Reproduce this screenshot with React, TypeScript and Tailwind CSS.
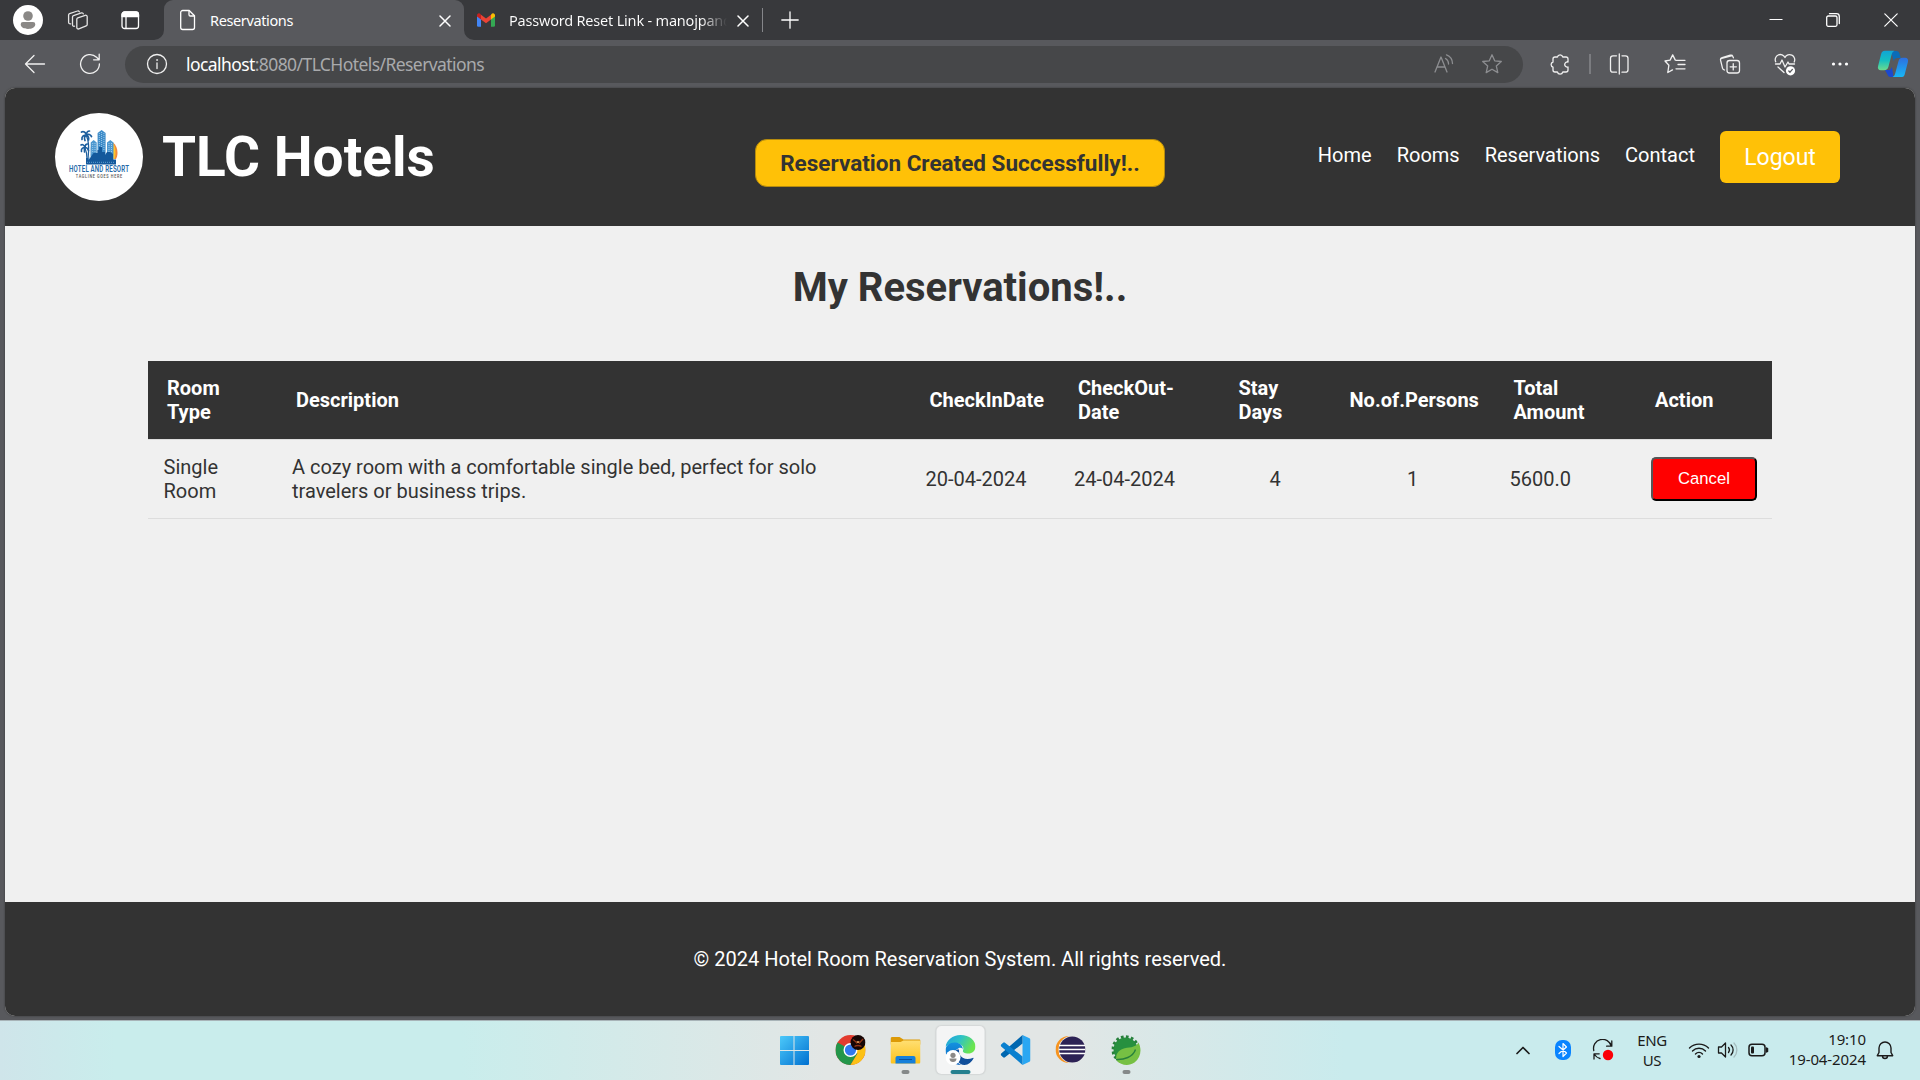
import React from "react";

type IconProps = { w: number; h: number; className?: string; children: React.ReactNode };

function Glyph({ w, h, className = "", children }: IconProps) {
  return (
    <svg
      width={w}
      height={h}
      viewBox={`0 0 ${w} ${h}`}
      fill="none"
      stroke="currentColor"
      strokeWidth={1.3}
      strokeLinecap="round"
      strokeLinejoin="round"
      className={"block shrink-0 " + className}
    >
      {children}
    </svg>
  );
}

function TabBar() {
  return (
    <div className="flex h-10 shrink-0 items-center bg-[#38393c] text-white">
      <Glyph w={30} h={30} className="ml-[13px]">
        <circle cx="15" cy="15" r="15" fill="#fff" stroke="none" />
        <circle cx="15" cy="11" r="4.8" fill="#8a8886" stroke="none" />
        <path d="M10 17h10a2.3 2.3 0 0 1 2.3 2.3c0 3-3.2 4.7-7.3 4.7s-7.3-1.7-7.3-4.7A2.3 2.3 0 0 1 10 17z" fill="#8a8886" stroke="none" />
      </Glyph>
      <Glyph w={24} h={24} className="ml-[23px] text-[#e4e4e4]">
        <path d="M10.8 11.2a1.5 1.5 0 0 1 1-1.4l7.4-2.5a1.5 1.5 0 0 1 2 1.4v7.8a1.5 1.5 0 0 1-1 1.4l-7.4 3a1.5 1.5 0 0 1-2-1.4z" />
        <path d="M8.5 18.2a1.5 1.5 0 0 1-2-1.5V9a1.5 1.5 0 0 1 1-1.4l7.9-2.7a1.5 1.5 0 0 1 1.9 1" />
        <path d="M4.6 15.8a1.5 1.5 0 0 1-2-1.5V7a1.5 1.5 0 0 1 1-1.4L11.4 3a1.5 1.5 0 0 1 1.9.8" />
      </Glyph>
      <Glyph w={20} h={20} className="ml-[30px]">
        <rect x="2" y="2" width="16.5" height="16.5" rx="2.5" />
        <path d="M2 5a3 3 0 0 1 3-3h10.5a3 3 0 0 1 3 3v1.5H2z" fill="#fff" />
        <path d="M6 6v12" />
      </Glyph>
      <div className="relative ml-6 flex h-10 w-[300px] items-center rounded-t-[9px] bg-[#58595d]">
        <svg className="absolute bottom-0 -left-[10px]" width="10" height="10" viewBox="0 0 10 10">
          <path d="M10 0v10H0A10 10 0 0 0 10 0z" fill="#58595d" />
        </svg>
        <svg className="absolute -right-[10px] bottom-0" width="10" height="10" viewBox="0 0 10 10">
          <path d="M0 0v10h10A10 10 0 0 1 0 0z" fill="#58595d" />
        </svg>
        <Glyph w={17} h={22} className="ml-[15px]">
          <path d="M1.7 3.5a2 2 0 0 1 2-2h6.5l5.3 5.3v11.7a2 2 0 0 1-2 2H3.7a2 2 0 0 1-2-2z" />
          <path d="M10 1.7v4a1.3 1.3 0 0 0 1.3 1.3h4" />
        </Glyph>
        <span className="-mt-px ml-[14px] w-[221px] whitespace-nowrap font-['Noto_Sans',sans-serif] text-[14.5px] leading-5 tracking-[-0.37px]">Reservations</span>
        <Glyph w={12} h={12} className="mt-[2px] ml-[8px]">
          <path d="M1 1l10 10M11 1L1 11" strokeWidth={1.5} />
        </Glyph>
      </div>
      <svg width="18" height="14" viewBox="0 0 18 14" className="ml-[13px] block shrink-0">
        <path d="M0 2.5V12.5A1.3 1.3 0 0 0 1.3 13.8H4V6z" fill="#4285f4" />
        <path d="M18 2.5V12.5a1.3 1.3 0 0 1-1.3 1.3H14V6z" fill="#34a853" />
        <path d="M14 1.8V6.5l4-3V2A1.9 1.9 0 0 0 15 .6z" fill="#fbbc04" />
        <path d="M4 1.8L9 5.6l5-3.8v4.7L9 10.3 4 6.5z" fill="#ea4335" />
        <path d="M0 2v1.5l4 3V1.8L3 .6A1.9 1.9 0 0 0 0 2z" fill="#c5221f" />
      </svg>
      <span className="-mt-px ml-[14px] w-[218px] overflow-hidden whitespace-nowrap bg-linear-to-r from-white from-88% to-transparent bg-clip-text font-['Noto_Sans',sans-serif] text-[14.5px] leading-5 tracking-[-0.2px] text-transparent">
        Password Reset Link - manojpand
      </span>
      <Glyph w={12} h={12} className="mt-[2px] ml-[10px]">
        <path d="M1 1l10 10M11 1L1 11" strokeWidth={1.5} />
      </Glyph>
      <div className="ml-[13px] h-6 w-px bg-[#85868a]" />
      <Glyph w={18} h={18} className="ml-[18px]">
        <path d="M9 .8v16.4M.8 9h16.4" />
      </Glyph>
      <div className="ml-auto flex items-center">
        <Glyph w={14} h={14} className="mr-[43px]">
          <path d="M.5 6.5h13" strokeWidth={1} strokeLinecap="butt" />
        </Glyph>
        <Glyph w={14} h={14} className="mr-[44px]">
          <rect x=".7" y="3" width="10.3" height="10.3" rx="1.5" />
          <path d="M3.5.7h7a2.8 2.8 0 0 1 2.8 2.8v7" />
        </Glyph>
        <Glyph w={14} h={14} className="mr-[22px]">
          <path d="M.8.8l12.4 12.4M13.2.8L.8 13.2" strokeWidth={1.2} />
        </Glyph>
      </div>
    </div>
  );
}

function Toolbar() {
  return (
    <div className="flex h-12 shrink-0 items-center bg-[#58595d] text-[#f0f0f0]">
      <Glyph w={22} h={20} className="-mt-px ml-[24px]">
        <path d="M10 1.5L1.5 10l8.5 8.5M1.5 10h19" />
      </Glyph>
      <Glyph w={22} h={22} className="-mt-px ml-[33px]">
        <path d="M20.4 10.8a9.4 9.4 0 1 1-2.8-6.5L20 6.700M20.2 1.2v5.6h-5.6" />
      </Glyph>
      <div className="ml-[24px] flex h-[37px] w-[1398px] items-center rounded-full bg-[#464749]">
        <Glyph w={22} h={22} className="ml-[21px]">
          <circle cx="11" cy="11" r="9.5" />
          <path d="M11 10v5.5" />
          <circle cx="11" cy="7" r=".6" fill="currentColor" strokeWidth={0.6} />
        </Glyph>
        <div className="-mt-px ml-[18px] whitespace-nowrap font-['Noto_Sans',sans-serif] text-[17.5px] leading-6 tracking-[-0.58px] text-[#a9aaac]">
          <span className="text-white">localhost</span>:8080/TLCHotels/Reservations
        </div>
        <Glyph w={22} h={20} className="-mt-px mr-[26px] ml-auto text-[#8d8e91]">
          <path d="M2 18L8 3l6 15M4 13h8" />
          <path d="M12.5 4.5a6 6 0 0 1 3 5.5M13.5.8a9.5 9.5 0 0 1 6 8.7" />
        </Glyph>
        <Glyph w={22} h={22} className="mr-[20px] text-[#8d8e91]">
          <path d="M11 1.8l2.7 6 6.6.7-5 4.4 1.5 6.7L11 16.2l-5.8 3.4 1.5-6.7-5-4.4 6.6-.7z" />
        </Glyph>
      </div>
      <Glyph w={32} h={32} className="ml-[20px]">
        <path d="M10 11a2 2 0 0 1 2-2h2.4a2.8 2.8 0 0 1 5.4 0H23a2 2 0 0 1 2 2v3a2.6 2.6 0 1 0 0 5v3a2 2 0 0 1-2 2h-3.2a2.8 2.8 0 0 1-5.4 0H12a2 2 0 0 1-2-2v-3a2.6 2.6 0 0 1 0-5z" />
      </Glyph>
      <div className="ml-[14px] h-5 w-[2px] bg-[#7b7c80]" />
      <Glyph w={32} h={32} className="ml-[12px]">
        <path d="M13.5 7.8H10a2.5 2.5 0 0 0-2.5 2.5v11.4a2.5 2.5 0 0 0 2.5 2.5h3.5M19 7.800h3.500a2.500 2.500 0 0 1 2.500 2.500v11.400a2.500 2.500 0 0 1-2.500 2.500H19M16.300 6v20" />
      </Glyph>
      <Glyph w={32} h={32} className="ml-[24px]">
        <path d="M17.500 12.300l-1.200-.2-2.600-5.200-2.600 5.200-5.100.9 3.900 4.200-1.100 7.300 4.700-2.600M17.500 12.300H26M19 16.500h7M17 20.800h9" />
      </Glyph>
      <Glyph w={32} h={32} className="ml-[23px]">
        <rect x="13" y="12.500" width="12.500" height="12.500" rx="2.500" />
        <path d="M19.250 15.700v6.200M16.150 18.800h6.200M10.500 22l-.7-.3a2.500 2.500 0 0 1-1.300-1.500L6.600 12.400a2.300 2.300 0 0 1 1.600-2.700l8-2.500a2.300 2.300 0 0 1 2.800 1.600l.4 1M6.800 10.500l11.500-3" />
      </Glyph>
      <Glyph w={32} h={32} className="ml-[23px]">
        <path d="M16 9.500a5 5 0 0 0-9.300 4.300M16 9.500a5 5 0 0 1 9.200 4.500M6.500 16H11l2-4 3 7 3-5 1 2h5.500M9 19l6 5.500" />
        <circle cx="21.500" cy="22.800" r="4.600" fill="#fff" stroke="none" />
        <path d="M19.800 23l1.200 1.200 2.400-2.800" stroke="#58595d" />
      </Glyph>
      <Glyph w={32} h={32} className="ml-[23px]">
        <g fill="#fff" stroke="none">
          <circle cx="9.500" cy="16" r="1.600" />
          <circle cx="16" cy="16" r="1.600" />
          <circle cx="22.500" cy="16" r="1.600" />
        </g>
      </Glyph>
      <svg width="32" height="32" viewBox="0 0 32 32" className="ml-[21px] block shrink-0">
        <defs>
          <linearGradient id="cpl" x1="0" y1="0" x2="0" y2="1">
            <stop offset="0" stopColor="#10a5d6" />
            <stop offset=".5" stopColor="#16bfc0" />
            <stop offset="1" stopColor="#6ddb8c" />
          </linearGradient>
          <linearGradient id="cpr" x1="0" y1="0" x2="0" y2="1">
            <stop offset="0" stopColor="#2d6fe0" />
            <stop offset="1" stopColor="#18b7f5" />
          </linearGradient>
        </defs>
        <path d="M14 3h5.500a3 3 0 0 1 2.800 2.100L23.800 10h-3.300a4 4 0 0 0-3.800 3z" fill="#0a6cb8" />
        <path d="M8 22h5l2-3 1.500 10h-3a3 3 0 0 1-2.900-2.200z" fill="#1b49cf" />
        <path d="M8 2.800h9.500c-1.700.7-2.400 2-3 4.200l-3 11.500c-.7 2.500-1.800 3.700-4.500 3.700H4c-2.700 0-3.600-1.700-2.900-4.200L4 6.500C4.700 4 5.500 2.800 8 2.800z" fill="url(#cpl)" />
        <path d="M25 29h-9.500c1.700-.7 2.300-2 2.900-4.200l3-11.300c.7-2.500 1.800-3.700 4.200-3.700H28c2.700 0 3.500 1.700 2.900 4.200l-2.900 11.300C27.300 27.800 27 29 25 29z" fill="url(#cpr)" />
      </svg>
    </div>
  );
}

function HotelLogo() {
  return (
    <svg width="88" height="88" viewBox="0 0 88 88" className="block shrink-0">
      <circle cx="44" cy="44" r="44" fill="#fff" />
      <path d="M58 29.500c3 2.500 4.500 6 4.500 10.500 0 2.500-.7 4.500-1.500 6h-3z" fill="#f58a3c" />
      <path d="M57.500 29.500c2 2.500 3 6 3 10.500 0 2.500-.4 4.500-1 6h-2z" fill="#ffc62b" />
      <path d="M42.600 20l4-3 4 3v27h-8z" fill="#3d8cc9" />
      <path d="M35.700 29.500l3-2.500 3 2.500V47h-6zM52 29.500l3.300-2.500 3.200 2.500V47H52z" fill="#4d98d0" />
      <path d="M38.500 40h4v-3h1.500v-3h3v5h3v3l2-3h3l3 2v6H31v-2h4z" fill="#14599c" />
      <path d="M44.300 20v14M46.600 19v15M48.900 20v17M37.700 30v9M40 30v9M54 30v9M56.500 30v9" stroke="#b7d8ef" strokeWidth=".8" strokeDasharray="1 1" />
      <rect x="31" y="46.500" width="30" height="5" fill="#14599c" />
      <path d="M32 49.300h28" stroke="#74b0dc" strokeWidth=".8" strokeDasharray="1 1" />
      <g stroke="#1d5f9e" fill="none" strokeLinecap="round">
        <path d="M31.500 23c2.500 5 2.500 14 1.500 23" strokeWidth="1.300" />
        <path d="M30 35c1.300 3 2 7 2 11" strokeWidth="1.200" />
        <path d="M31.500 22c-1-3-3-4-5-3M31.500 22c-3 0-5 1.500-4.500 4.500M31.500 22c0-2 1-4 3-4M31.500 22c2-1.500 4-.5 5 1.500M31.500 22c1.500 1 2.500 3 2 5M31 22c-1.500 1.500-2 3-1 5.500" strokeWidth="1.700" />
        <path d="M30 34.500c-1-2.500-2.500-3.500-4-2.500M30 34.500c-2.500 0-4 1.500-3.500 4M30 34.500c0-2 1-3.500 2.500-3.500M30 34.500c1.500 0 3 1 3.500 3M30 34.500c-1 1.500-1 3-.5 4.500" strokeWidth="1.600" />
        <path d="M35 34c1.500 4 1 9-1 12" stroke="#a9cbe6" strokeWidth="1" />
      </g>
      <g transform="scale(0.68 1)" fontFamily="Roboto, sans-serif" textAnchor="middle">
        <text x="64.700" y="59.500" textLength="88" fontWeight="600" fontSize="9" fill="#2469a8">HOTEL AND RESORT</text>
        <text x="64.700" y="64.600" textLength="68" fontSize="5.600" fontWeight="500" fill="#555">TAGLINE GOES HERE</text>
      </g>
    </svg>
  );
}

const columns = [
  "Room Type",
  "Description",
  "CheckInDate",
  "CheckOut-Date",
  "Stay Days",
  "No.of.Persons",
  "Total Amount",
  "Action",
];

function Reservations() {
  const grid = "grid grid-cols-[129px_633.5px_148.5px_160.5px_111px_164px_141.5px_136px] items-center";
  return (
    <div className="mx-auto w-[1624px] text-[20px] leading-6">
      <div className={grid + " h-[79px] border-b border-[#ddd] bg-[#333] font-bold text-white"}>
        {columns.map((c) => (
          <div key={c} className={c === "Room Type" || c === "Stay Days" || c === "Total Amount" ? "pr-12 pl-[19px]" : "pr-2 pl-[19px]"}>
            {c === "CheckOut-Date" ? <>CheckOut-<br />Date</> : c}
          </div>
        ))}
      </div>
      <div className={grid + " h-[79px] border-b border-[#ddd]"}>
        <div className="pr-8 pl-[15.5px]">Single Room</div>
        <div className="pr-16 pl-[15px]">A cozy room with a comfortable single bed, perfect for solo travelers or business trips.</div>
        <div className="pl-[15px]">20-04-2024</div>
        <div className="pl-[15px]">24-04-2024</div>
        <div className="text-center">4</div>
        <div className="text-center">1</div>
        <div className="pl-[15px]">5600.0</div>
        <div className="pl-[15px]">
          <button className="block h-11 w-[106px] rounded-[5px] border-2 border-t-[#555] border-r-black border-b-black border-l-[#555] bg-[#f00] font-['Liberation_Sans',sans-serif] text-[16.67px] leading-5 text-white">
            Cancel
          </button>
        </div>
      </div>
    </div>
  );
}

function Page() {
  return (
    <div className="mx-[5px] flex h-[928px] shrink-0 flex-col overflow-hidden rounded-[10px] bg-[#f0f0f0] font-[Roboto,sans-serif] text-[#333] shadow-[0_0_2px_#333]">
      <header className="relative flex h-[138px] shrink-0 items-center bg-[#333] pl-[50px] text-white">
        <HotelLogo />
        <h1 className="ml-[19px] text-[55px] leading-none font-bold">TLC Hotels</h1>
        <nav className="mr-[75px] ml-auto flex items-center gap-[25px] text-[20px]">
          <a className="-mt-1">Home</a>
          <a className="-mt-1">Rooms</a>
          <a className="-mt-1">Reservations</a>
          <a className="-mt-1">Contact</a>
          <button className="h-[52px] w-[120px] rounded-[6px] bg-[#ffc107] pt-px text-[23px] leading-7">Logout</button>
        </nav>
        <div className="absolute top-[51px] left-[750px] flex h-[48px] w-[410px] items-center justify-center rounded-[12px] border border-[#b58b0e] bg-[#ffc107] pt-px text-[22.5px] font-bold whitespace-nowrap text-[#333]">
          Reservation Created Successfully!..
        </div>
      </header>
      <main className="flex-1">
        <h2 className="pt-[37px] pb-[48px] text-center text-[40px] leading-[50px] font-bold">My Reservations!..</h2>
        <Reservations />
      </main>
      <footer className="flex h-[114px] shrink-0 items-center justify-center bg-[#333] text-[20px] text-white">
        © 2024 Hotel Room Reservation System. All rights reserved.
      </footer>
    </div>
  );
}

function Slot({ children, active, dot }: { children: React.ReactNode; active?: boolean; dot?: boolean }) {
  return (
    <div className={"relative flex h-12 w-12 items-center justify-center rounded-[5px] " + (active ? "bg-[#f4f5f5] shadow-[0_0_1px_1px_#d5d8d8]" : "")}>
      <svg width="30" height="30" viewBox="0 0 30 30" className="block">{children}</svg>
      {active && <span className="absolute bottom-0 left-[14px] h-1 w-5 rounded-full bg-[#25808f]" />}
      {dot && <span className="absolute bottom-0 left-5 h-1 w-2 rounded-full bg-[#858989]" />}
    </div>
  );
}

function TaskIcons() {
  return (
    <>
      <Slot>
        <defs>
          <linearGradient id="win" x1="0" y1="0" x2="1" y2="1">
            <stop offset="0" stopColor="#4cc9fa" />
            <stop offset="1" stopColor="#0070d0" />
          </linearGradient>
        </defs>
        <path d="M1.500 1H14v14H.5V2a1 1 0 0 1 1-1zM15 1h13.500a1 1 0 0 1 1 1v13H15zM.5 16H14v14H1.500a1 1 0 0 1-1-1zM15 16h14.500v13a1 1 0 0 1-1 1H15z" fill="url(#win)" />
      </Slot>
      <Slot>
        <circle cx="15" cy="15" r="15" fill="#e33b2e" />
        <path d="M2 7.500A15 15 0 0 0 15 30l7-11.500-7-4z" fill="#23964a" />
        <path d="M15 30A15 15 0 0 0 28 7.500H15l7 11z" fill="#fbc116" />
        <circle cx="15" cy="15" r="7" fill="#fff" />
        <circle cx="15" cy="15" r="5.600" fill="#3079ee" />
        <circle cx="22.500" cy="7.500" r="7.500" fill="#160605" />
        <path d="M17.500 4.500c1.500 1.500 3 2 4 4M27.500 4c-1.500 2-2.500 2.500-4 4.500M19 11.500c1.500-1 2-1 3.500-1s2 0 3.500 1" stroke="#8f3416" strokeWidth="1.300" fill="none" />
        <path d="M21.500 6l1 2 1-2" stroke="#f1a35c" fill="none" />
      </Slot>
      <Slot dot>
        <defs>
          <linearGradient id="fol" x1="0" y1="0" x2="0" y2="1">
            <stop offset="0" stopColor="#ffdf72" />
            <stop offset="1" stopColor="#fdc21c" />
          </linearGradient>
        </defs>
        <path d="M0 3.500A1.500 1.500 0 0 1 1.500 2H9l4 2.500h16a1 1 0 0 1 1 1v4H0z" fill="#dc9a07" />
        <path d="M0 7h10l3-1.500h16a1 1 0 0 1 1 1V27a1.500 1.500 0 0 1-1.500 1.500h-27A1.500 1.500 0 0 1 0 27z" fill="url(#fol)" />
        <path d="M5 28.500V23a2 2 0 0 1 2-2h16a2 2 0 0 1 2 2v5.500z" fill="#1680da" />
        <path d="M8.500 24.500h13" stroke="#0b529d" strokeWidth="1" />
      </Slot>
      <Slot active>
        <defs>
          <linearGradient id="edg" x1="0" y1="0" x2="1" y2=".4">
            <stop offset="0" stopColor="#1e9fe0" />
            <stop offset=".5" stopColor="#2ec2c6" />
            <stop offset="1" stopColor="#6be54f" />
          </linearGradient>
          <linearGradient id="edb" x1="0" y1="0" x2="0" y2="1">
            <stop offset="0" stopColor="#1492e0" />
            <stop offset="1" stopColor="#0a62bd" />
          </linearGradient>
        </defs>
        <path d="M0 12C1 5 7 0 15 0c9 0 15 5.500 15 11.500 0 4.500-3.500 7-7 7-4 0-6.500-1.500-5.500-3 1.500-3-1-6.500-5.500-7-5-.5-10 .5-12 3.500z" fill="url(#edg)" />
        <path d="M0 15c0-5 5-8 10-7.500 5.500.5 8 4.500 7 7.500-1-1.500-2.500-2-4-1.500-3.500 1-5 5-3.500 9.500 1 3 3.500 6 6.500 7C7 30 0 24 0 15z" fill="url(#edb)" />
        <path d="M9.500 17c-.5 6 3.500 13 9.500 13 4 0 7-3 9-6.500.2-.7-.3-.8-.8-.5-5.200 2-11.200 1-13.200-4-.8-2-.5-3.500.5-4.500-2.500-.5-4.500.5-5 2.500z" fill="#114f9b" />
        <circle cx="7.500" cy="22.500" r="7.500" fill="#fff" />
        <circle cx="7.500" cy="20.300" r="2.600" fill="#8a8886" />
        <path d="M4 23.500h7c0 2.500-1.500 3.500-3.500 3.500S4 26 4 23.500z" fill="#8a8886" />
        <path d="M13 13.200c2-1 4.500 0 4.500 1.800 0 1-1 1.500 0 2.800-2.500.5-4.500-1.800-4.500-4.600z" fill="#f4f5f5" />
      </Slot>
      <Slot>
        <path d="M22 0l7 3.300a2 2 0 0 1 1 1.700v20a2 2 0 0 1-1 1.700L22 30z" fill="#2aa7f2" />
        <path d="M22 0v8.500L4.500 22.300a1.500 1.500 0 0 1-1.900 0L.7 20.500a1.300 1.300 0 0 1 0-1.900z" fill="#0067b0" />
        <path d="M22 30v-8.500L4.500 7.700a1.500 1.500 0 0 0-1.900 0L.7 9.500a1.300 1.300 0 0 0 0 1.900z" fill="#0a80cf" />
      </Slot>
      <Slot>
        <circle cx="13.500" cy="14.500" r="13.500" fill="#f7941f" />
        <circle cx="16.800" cy="14.500" r="13.800" fill="#e6e8e7" />
        <circle cx="16.800" cy="14.500" r="13.100" fill="#2c2255" />
        <path d="M3.500 10.500h26.300M3.500 14.500h26.300M3.500 18.500h26.300" stroke="#fff" strokeWidth="1.600" />
      </Slot>
      <Slot dot>
        <circle cx="14" cy="14.500" r="12" fill="#27903f" />
        <circle cx="14" cy="14.500" r="12.800" fill="none" stroke="#27803c" strokeWidth="2.800" strokeDasharray="2.700 2.330" />
        <path d="M27 7.500c3.500 7 2.500 15-4 20-5.500 4-13.500 3-18-2-1-4 0-9 6-11.500 6-2.300 12.500-.5 16-6.500z" fill="#76c043" />
        <path d="M4.500 24.500c8 .5 17-2.500 19.500-10" stroke="#27803c" strokeWidth="1.400" fill="none" />
      </Slot>
    </>
  );
}

function Taskbar() {
  return (
    <div className="grid h-[60px] shrink-0 grid-cols-[1fr_auto_1fr] items-center border-t border-[#a8b4b8] bg-[linear-gradient(90deg,#cfe5ea_0%,#c9edec_6%,#c9edec_24%,#e2e6e5_43%,#e2e6e5_55%,#c9ebed_70%,#c9ebed_100%)] pb-px text-[#1b1b1b]">
      <div />
      <div className="flex translate-x-[0.5px] gap-[7.2px]">
        <TaskIcons />
      </div>
      <div className="flex items-center justify-end font-['Noto_Sans',sans-serif] leading-5">
        <Glyph w={14} h={9} className="mr-[25px]">
          <path d="M1 7.500l6-6 6 6" strokeWidth={1.700} />
        </Glyph>
        <Glyph w={16} h={20} className="mr-[21px]">
          <rect width="16" height="20" rx="7" fill="#0a84ff" stroke="none" />
          <path d="M4 6.500l7.500 6.500L8 16.500v-13L11.500 7 4 13.500" stroke="#fff" strokeWidth={1.200} />
        </Glyph>
        <Glyph w={22} h={22} className="mr-[23px]">
          <path d="M1.800 11.500a9 9 0 0 1 17.500-4.300M19.800 2v5.200h-5.200M2 20v-5.200h5.200M2.500 15.500A9 9 0 0 0 8 19.500" />
          <circle cx="16" cy="16" r="5.200" fill="#fb0007" stroke="none" />
        </Glyph>
        <div className="mr-[21px] w-[30px] text-center text-[15px] tracking-[-0.4px]">
          ENG
          <br />
          US
        </div>
        <Glyph w={22} h={18} className="mr-[7px]">
          <path d="M1.500 7a13.500 13.500 0 0 1 19 0M4.500 10a9.200 9.200 0 0 1 13 0M7.500 13a5 5 0 0 1 7 0" strokeWidth={1.400} />
          <circle cx="11" cy="15.500" r="1.600" fill="currentColor" stroke="none" />
        </Glyph>
        <Glyph w={22} h={18} className="mr-[9px]">
          <path d="M1.500 6h3l4-4v14l-4-4h-3z" />
          <path d="M11.500 6.500a4 4 0 0 1 0 5M14 4a7 7 0 0 1 0 10" />
          <path d="M17 2a10 10 0 0 1 0 14" stroke="#a5bcbe" />
        </Glyph>
        <Glyph w={21} h={14} className="mr-[17px]">
          <rect x="1" y="1.300" width="16" height="11.400" rx="3" strokeWidth={1.500} />
          <rect x="3" y="3.500" width="3" height="7" rx="1" fill="currentColor" stroke="none" />
          <path d="M18.500 5v4M19.500 5.500v3" strokeWidth={1.500} />
        </Glyph>
        <div className="-mt-[2px] mr-[10px] w-[80px] text-right text-[15px] tracking-[-0.1px] whitespace-nowrap">
          19:10
          <br />
          19-04-2024
        </div>
        <Glyph w={18} h={20} className="mr-[26px]">
          <path d="M3 8a6 6 0 0 1 12 0v4.500l1.700 3.200H1.300L3 12.500zM6.500 16a2.500 2.500 0 0 0 5 0" strokeWidth={1.400} />
        </Glyph>
      </div>
    </div>
  );
}

export default function App() {
  return (
    <div className="flex h-[1080px] w-[1920px] flex-col overflow-hidden bg-[#58595d]">
      <TabBar />
      <Toolbar />
      <Page />
      <div className="h-1 shrink-0" />
      <Taskbar />
    </div>
  );
}
